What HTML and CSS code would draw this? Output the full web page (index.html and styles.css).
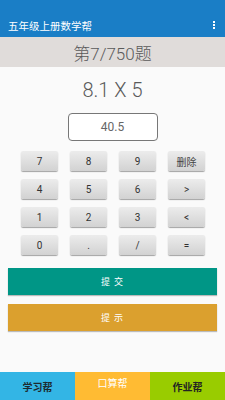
FILE: index.html
```html
<!DOCTYPE html>
<html>
<head>
<meta charset="utf-8">
<link rel="stylesheet" href="styles.css">
</head>
<body>
<div class="app">
  <header class="bar">
    <span class="title">五年级上册数学帮</span>
    <span class="menu"><i></i><i></i><i></i></span>
  </header>
  <div class="progress">第7/750题</div>
  <div class="question">8.1 X 5</div>
  <div class="answer">40.5</div>
  <div class="keys">
    <div class="key">7</div><div class="key">8</div><div class="key">9</div><div class="key cjk">删除</div>
    <div class="key">4</div><div class="key">5</div><div class="key">6</div><div class="key">&gt;</div>
    <div class="key">1</div><div class="key">2</div><div class="key">3</div><div class="key">&lt;</div>
    <div class="key">0</div><div class="key">.</div><div class="key">/</div><div class="key">=</div>
  </div>
  <div class="btn submit">提 交</div>
  <div class="btn hint">提 示</div>
  <div class="spacer"></div>
  <nav class="tabs">
    <div class="tab t1">学习帮</div>
    <div class="tab t2">口算帮</div>
    <div class="tab t3">作业帮</div>
  </nav>
</div>
</body>
</html>
```
FILE: styles.css
```css
* { box-sizing: border-box; margin: 0; padding: 0; }
html, body { width: 225px; height: 400px; overflow: hidden; }
body { background: #fafafa; font-family: Roboto, "Noto Sans CJK SC", sans-serif; }
.app { display: flex; flex-direction: column; height: 400px; }
.bar { height: 37px; background: #1a7ec6; display: flex; align-items: center; justify-content: space-between; padding: 13px 8px 0 8px; }
.title { color: #fff; font-family: "Noto Sans CJK SC", sans-serif; font-size: 10.5px; }
.menu { display: flex; flex-direction: column; gap: 1px; padding-right: 2px; }
.menu i { width: 2px; height: 2px; background: #fff; display: block; }
.progress { height: 30px; background: #e0dcda; display: flex; align-items: center; justify-content: center; font-size: 17px; color: #5a5a5a; font-family: Roboto, "Noto Sans CJK SC", sans-serif; font-weight: 300; }
.question { margin-top: 8px; text-align: center; font-size: 20px; color: #5a5a5a; height: 30px; line-height: 30px; font-weight: 300; }
.answer { margin: 8px auto 0; width: 90px; height: 28px; border: 1px solid #777; border-radius: 4px; background: #fff; display: flex; align-items: center; justify-content: center; font-size: 12px; color: #666; }
.keys { margin-top: 10px; padding-left: 21px; display: grid; grid-template-columns: repeat(4, 37px); column-gap: 12px; row-gap: 8px; }
.key { height: 20px; border-radius: 2px; background: linear-gradient(#ececec, #d2d2d2); box-shadow: 0 1px 1px rgba(0,0,0,0.35); display: flex; align-items: center; justify-content: center; font-size: 10px; color: #333; }
.key.cjk { font-family: "Noto Sans CJK SC", sans-serif; font-size: 10px; color: #444; }
.btn { margin: 0 8px; height: 27px; display: flex; align-items: center; justify-content: center; color: #fff; font-family: "Noto Sans CJK SC", sans-serif; font-size: 9px; letter-spacing: 1px; box-shadow: 0 1px 1px rgba(0,0,0,0.25); }
.submit { margin-top: 13px; background: #009686; }
.hint { margin-top: 9px; background: #dba02e; }
.spacer { flex: 1; }
.tabs { height: 28px; display: flex; }
.tab { flex: 1; display: flex; align-items: center; justify-content: center; font-family: "Noto Sans CJK SC", sans-serif; font-size: 10px; color: #1d2a30; font-weight: bold; }
.t1 { background: #33b5e5; }
.t2 { background: #ffbb33; color: #fff; align-items: flex-start; padding-top: 3px; font-weight: normal; }
.t3 { background: #99cc00; color: #222; }
```
